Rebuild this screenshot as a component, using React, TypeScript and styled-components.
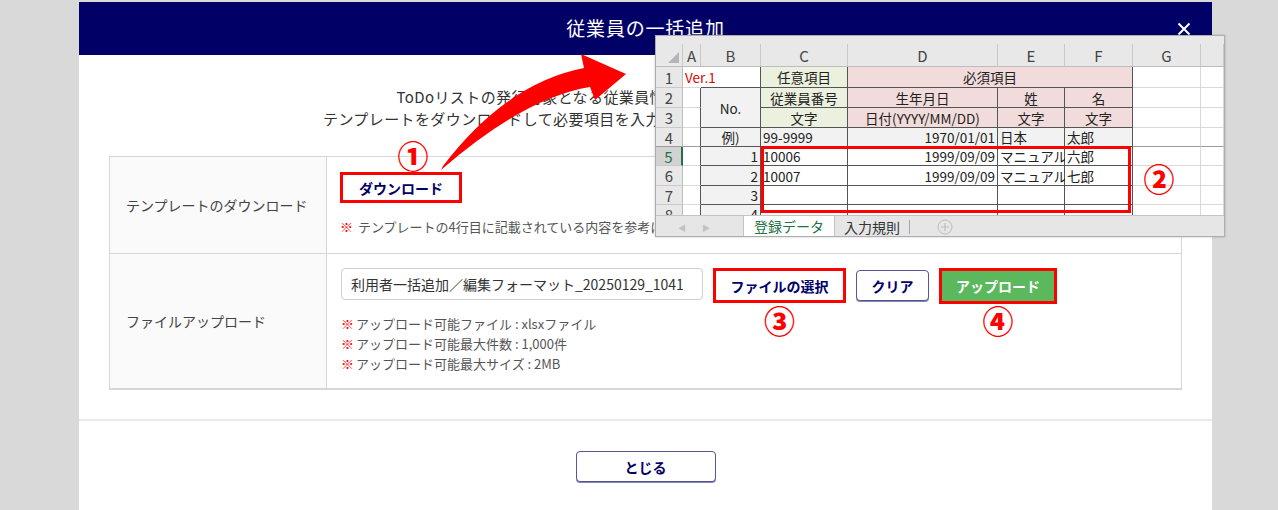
import React from 'react';
import styled, { createGlobalStyle } from 'styled-components';

const GlobalStyle = createGlobalStyle`
  html, body {
    margin: 0;
    padding: 0;
  }
  body {
    background: #d9d9d9;
    font-family: "Noto Sans CJK JP", "Noto Sans", sans-serif;
    color: #333;
  }
`;

const NAVY = '#000066';
const RED = '#ff0000';

const Stage = styled.div`
  position: relative;
  width: 1278px;
  height: 510px;
  overflow: hidden;
`;

const Modal = styled.div`
  margin: 2px 0 0 79px;
  width: 1133px;
  min-height: 600px;
  background: #fff;
`;

const Header = styled.header`
  height: 53px;
  background: ${NAVY};
  display: grid;
  grid-template-columns: 1fr auto 1fr;
  align-items: center;
  color: #fff;
`;

const Title = styled.h1`
  grid-column: 2;
  margin: 0 0 2px;
  font-size: 19px;
  font-weight: 400;
  letter-spacing: 0.8px;
`;

const CloseButton = styled.button`
  justify-self: end;
  margin-right: 18px;
  width: 20px;
  height: 20px;
  padding: 0;
  border: 0;
  background: none;
  display: flex;
  align-items: center;
  justify-content: center;
`;

const Body = styled.div`
  padding: 31px 30px 29px;
`;

const Intro = styled.p`
  margin: 0 0 26px;
  text-align: center;
  font-size: 15px;
  line-height: 22px;
  letter-spacing: 0.4px;
  color: #333;
`;

const FormTable = styled.div`
  display: grid;
  grid-template-columns: 217px 1fr;
  border: 1px solid #d6d6d6;
  border-bottom-width: 2px;
`;

const LabelCell = styled.div<{ $last?: boolean }>`
  display: flex;
  align-items: center;
  padding: 0 16px;
  background: #fafafa;
  border-right: 1px solid #d6d6d6;
  border-bottom: ${p => (p.$last ? 'none' : '1px solid #d6d6d6')};
  font-size: 14px;
  color: #444;
`;

const ValueCell = styled.div<{ $last?: boolean; $pad: string }>`
  padding: ${p => p.$pad};
  border-bottom: ${p => (p.$last ? 'none' : '1px solid #d6d6d6')};
`;

const Controls = styled.div`
  display: flex;
  align-items: flex-start;
  gap: 10px;
  height: 36px;
`;

const RedFrame = styled.div<{ $inline?: boolean }>`
  position: relative;
  display: ${p => (p.$inline ? 'inline-flex' : 'flex')};
  border: 3px solid ${RED};
`;

const FrameButton = styled.button<{ $w: number; $h: number; $green?: boolean }>`
  display: block;
  width: ${p => p.$w}px;
  height: ${p => p.$h}px;
  padding: 0;
  border: 0;
  background: ${p => (p.$green ? '#5cb85c' : '#fff')};
  color: ${p => (p.$green ? '#fff' : NAVY)};
  font-family: inherit;
  font-size: 14px;
  font-weight: 700;
`;

const OutlineButton = styled.button<{ $w: number; $h: number; $offset?: number }>`
  width: ${p => p.$w}px;
  height: ${p => p.$h}px;
  margin-top: ${p => p.$offset ?? 0}px;
  padding: 0;
  background: #fff;
  border: 1px solid #55559a;
  border-radius: 4px;
  box-shadow: 0 1px 0 #8585b5;
  color: ${NAVY};
  font-family: inherit;
  font-size: 14px;
  font-weight: 700;
`;

const FileInput = styled.div`
  box-sizing: border-box;
  width: 362px;
  height: 32px;
  display: flex;
  align-items: center;
  padding: 0 9px;
  border: 1px solid #cfcfcf;
  border-radius: 4px;
  font-size: 14px;
  color: #333;
  white-space: nowrap;
  overflow: hidden;
`;

const Notes = styled.ul<{ $gap: number }>`
  list-style: none;
  margin: ${p => p.$gap}px 0 0;
  padding: 0;
  font-size: 13px;
  line-height: 20px;
  color: #555;
`;

const Asterisk = styled.span`
  color: ${RED};
  margin-right: 2px;
`;

const Mark = styled.span<{ $top: string; $shift?: number }>`
  position: absolute;
  left: calc(50% + ${p => p.$shift ?? 0}px);
  top: ${p => p.$top};
  transform: translate(-50%, -50%);
  font-size: 31px;
  font-weight: 900;
  line-height: 1;
  color: ${RED};
  white-space: nowrap;
  pointer-events: none;
`;

const Footer = styled.div`
  border-top: 2px solid #e9e9e9;
  padding-top: 30px;
  display: flex;
  justify-content: center;
`;

/* ---- spreadsheet screenshot overlay ---- */

const COLUMNS = '27px 18px 60px 87px 150px 67px 68px 68px 1fr';

const Sheet = styled.div`
  position: absolute;
  left: 655px;
  top: 35px;
  width: 570px;
  height: 202px;
  box-sizing: border-box;
  border: 1px solid #aeaeae;
  box-shadow: 0 0 2px rgba(0, 0, 0, 0.25);
  background: #fff;
  display: flex;
  flex-direction: column;
  overflow: hidden;
  font-family: "Noto Sans CJK JP", sans-serif;
`;

const ColumnBand = styled.div`
  height: 31px;
  flex-shrink: 0;
  display: grid;
  grid-template-columns: ${COLUMNS};
  align-items: end;
  background: #e8e8e8;
  border-bottom: 1px solid #bdbdbd;
  box-sizing: border-box;
`;

const ColumnHead = styled.div`
  height: 22px;
  display: flex;
  align-items: center;
  justify-content: center;
  border-right: 1px solid #c9c9c9;
  font-size: 15px;
  color: #444;
`;

const Corner = styled.div`
  height: 22px;
  position: relative;
  border-right: 1px solid #c9c9c9;
  &::after {
    content: '';
    position: absolute;
    right: 3px;
    bottom: 3px;
    border-style: solid;
    border-width: 0 0 11px 11px;
    border-color: transparent transparent #b5b5b5 transparent;
  }
`;

const Grid = styled.div`
  height: 148px;
  flex-shrink: 0;
  display: grid;
  grid-template-columns: ${COLUMNS};
  grid-template-rows: 21px 20px 20px 19px 19px 20px 19px 19px;
  overflow: hidden;
`;

const RowHead = styled.div<{ $row: number; $active?: boolean; $bb: string }>`
  grid-column: 1;
  grid-row: ${p => p.$row};
  box-sizing: border-box;
  display: flex;
  align-items: center;
  justify-content: center;
  background: ${p => (p.$active ? '#d2d2d2' : '#e8e8e8')};
  border-right: ${p => (p.$active ? '2px solid #217346' : '1px solid #bdbdbd')};
  border-bottom: 1px solid ${p => p.$bb};
  font-size: 15px;
  color: ${p => (p.$active ? '#217346' : '#444')};
`;

type Align = 'left' | 'center' | 'right';

const Cell = styled.div<{
  $col: number;
  $row: number;
  $colSpan: number;
  $rowSpan: number;
  $bg: string;
  $align: Align;
  $color: string;
  $rb: string;
  $bb: string;
  $z: number;
}>`
  grid-column: ${p => p.$col} / span ${p => p.$colSpan};
  grid-row: ${p => p.$row} / span ${p => p.$rowSpan};
  position: relative;
  z-index: ${p => p.$z};
  box-sizing: border-box;
  display: flex;
  align-items: center;
  justify-content: ${p => (p.$align === 'left' ? 'flex-start' : p.$align === 'right' ? 'flex-end' : 'center')};
  padding: 0 2px;
  background: ${p => p.$bg};
  border-right: 1px solid ${p => p.$rb};
  border-bottom: 1px solid ${p => p.$bb};
  font-size: 13.5px;
  color: ${p => p.$color};
  white-space: nowrap;
`;

const AnnotBox = styled.div`
  position: absolute;
  z-index: 5;
  left: 105px;
  top: 110px;
  width: 370px;
  height: 67px;
  box-sizing: border-box;
  border: 3px solid ${RED};
  pointer-events: none;
`;

const SheetMark = styled.span`
  position: absolute;
  z-index: 5;
  left: 503px;
  top: 141px;
  transform: translate(-50%, -50%);
  font-size: 31px;
  font-weight: 900;
  line-height: 1;
  color: ${RED};
`;

const TabBar = styled.div`
  flex: 1;
  display: flex;
  align-items: stretch;
  background: #e6e6e6;
  border-top: 1px solid #c4c4c4;
  font-size: 14px;
`;

const TabNav = styled.div`
  width: 87px;
  display: flex;
  align-items: center;
  gap: 16px;
  padding-left: 22px;
  box-sizing: border-box;
  font-size: 8px;
  color: #c2c2c2;
`;

const SheetTab = styled.div<{ $active?: boolean }>`
  display: flex;
  align-items: center;
  padding: ${p => (p.$active ? '0 10px' : '0 9px')};
  background: ${p => (p.$active ? '#fff' : 'transparent')};
  color: ${p => (p.$active ? '#217346' : '#333')};
  border-bottom: ${p => (p.$active ? '2px solid #217346' : '0')};
  border-left: ${p => (p.$active ? '1px solid #c4c4c4' : '0')};
  border-right: ${p => (p.$active ? '1px solid #c4c4c4' : '0')};
`;

const TabSeparator = styled.div`
  width: 1px;
  margin: 4px 0;
  background: #a8a8a8;
`;

const AddSheet = styled.div`
  display: flex;
  align-items: center;
  margin-left: 27px;
`;

const Overlay = styled.svg`
  position: absolute;
  left: 0;
  top: 0;
  pointer-events: none;
`;

type CellSpec = {
  col: number;
  row: number;
  text?: string;
  colSpan?: number;
  rowSpan?: number;
  bg?: string;
  align?: Align;
  color?: string;
};

const GREEN_BG = '#ebf1de';
const PINK_BG = '#f2dcdb';
const GRAY_BG = '#f2f2f2';

const specs: CellSpec[] = [
  { col: 2, row: 1, text: 'Ver.1', align: 'left', color: '#e00000' },
  { col: 4, row: 1, text: '任意項目', bg: GREEN_BG },
  { col: 5, row: 1, colSpan: 3, text: '必須項目', bg: PINK_BG },
  { col: 3, row: 2, rowSpan: 2, text: 'No.', bg: GRAY_BG },
  { col: 4, row: 2, text: '従業員番号', bg: GREEN_BG },
  { col: 5, row: 2, text: '生年月日', bg: PINK_BG },
  { col: 6, row: 2, text: '姓', bg: PINK_BG },
  { col: 7, row: 2, text: '名', bg: PINK_BG },
  { col: 4, row: 3, text: '文字', bg: GREEN_BG },
  { col: 5, row: 3, text: '日付(YYYY/MM/DD)', bg: PINK_BG },
  { col: 6, row: 3, text: '文字', bg: PINK_BG },
  { col: 7, row: 3, text: '文字', bg: PINK_BG },
  { col: 3, row: 4, text: '例)', bg: GRAY_BG },
  { col: 4, row: 4, text: '99-9999', bg: GRAY_BG, align: 'left' },
  { col: 5, row: 4, text: '1970/01/01', bg: GRAY_BG, align: 'right' },
  { col: 6, row: 4, text: '日本', bg: GRAY_BG, align: 'left' },
  { col: 7, row: 4, text: '太郎', bg: GRAY_BG, align: 'left' },
  { col: 3, row: 5, text: '1', bg: GRAY_BG, align: 'right' },
  { col: 4, row: 5, text: '10006', align: 'left' },
  { col: 5, row: 5, text: '1999/09/09', align: 'right' },
  { col: 6, row: 5, text: 'マニュアル', align: 'left' },
  { col: 7, row: 5, text: '六郎', align: 'left' },
  { col: 3, row: 6, text: '2', bg: GRAY_BG, align: 'right' },
  { col: 4, row: 6, text: '10007', align: 'left' },
  { col: 5, row: 6, text: '1999/09/09', align: 'right' },
  { col: 6, row: 6, text: 'マニュアル', align: 'left' },
  { col: 7, row: 6, text: '七郎', align: 'left' },
  { col: 3, row: 7, text: '3', bg: GRAY_BG, align: 'right' },
  { col: 3, row: 8, text: '4', bg: GRAY_BG, align: 'right' },
];

const DARK = '#555';
const LIGHT = '#d9d9d9';
const FREEZE = '#9c9c9c';

const inTable = (col: number, row: number) =>
  (col >= 3 && col <= 7 && row >= 2) || (col >= 4 && col <= 7 && row === 1);

function buildCells(): CellSpec[] {
  const covered = new Set<string>();
  specs.forEach(s => {
    for (let c = s.col; c < s.col + (s.colSpan ?? 1); c++)
      for (let r = s.row; r < s.row + (s.rowSpan ?? 1); r++) covered.add(`${c}-${r}`);
  });
  const all = [...specs];
  for (let r = 1; r <= 8; r++)
    for (let c = 2; c <= 9; c++) if (!covered.has(`${c}-${r}`)) all.push({ col: c, row: r });
  return all;
}

function borders(s: CellSpec) {
  const lastCol = s.col + (s.colSpan ?? 1) - 1;
  const lastRow = s.row + (s.rowSpan ?? 1) - 1;
  let rb = LIGHT;
  let bb = LIGHT;
  if (inTable(s.col, s.row) || inTable(lastCol + 1, s.row)) rb = DARK;
  if (inTable(s.col, s.row) || inTable(s.col, lastRow + 1)) bb = DARK;
  if (bb !== DARK && lastRow === 4) bb = FREEZE;
  if (s.col === 2 && s.row === 1) rb = '#fff';
  return { rb, bb };
}

const sheetCells = buildCells();

const SpreadsheetShot: React.FC = () => (
  <Sheet>
    <ColumnBand>
      <Corner />
      {['A', 'B', 'C', 'D', 'E', 'F', 'G', ''].map((l, i) => (
        <ColumnHead key={i}>{l}</ColumnHead>
      ))}
    </ColumnBand>
    <Grid>
      {[1, 2, 3, 4, 5, 6, 7, 8].map(r => (
        <RowHead key={r} $row={r} $active={r === 5} $bb={r === 4 ? FREEZE : '#c9c9c9'}>
          {r}
        </RowHead>
      ))}
      {sheetCells.map(s => {
        const { rb, bb } = borders(s);
        return (
          <Cell
            key={`${s.col}-${s.row}`}
            $col={s.col}
            $row={s.row}
            $colSpan={s.colSpan ?? 1}
            $rowSpan={s.rowSpan ?? 1}
            $bg={s.bg ?? (s.col === 3 && s.row === 1 ? 'transparent' : '#fff')}
            $align={s.align ?? 'center'}
            $color={s.color ?? '#222'}
            $rb={rb}
            $bb={bb}
            $z={s.col === 2 && s.row === 1 ? 2 : 1}
          >
            {s.text}
          </Cell>
        );
      })}
    </Grid>
    <TabBar>
      <TabNav>
        <span>◀</span>
        <span>▶</span>
      </TabNav>
      <SheetTab $active>登録データ</SheetTab>
      <SheetTab>入力規則</SheetTab>
      <TabSeparator />
      <AddSheet>
        <svg width="16" height="16" viewBox="0 0 16 16">
          <circle cx="8" cy="8" r="7" fill="none" stroke="#bdbdbd" strokeWidth="1" />
          <path d="M8 4v8M4 8h8" stroke="#bdbdbd" strokeWidth="1.2" />
        </svg>
      </AddSheet>
    </TabBar>
    <AnnotBox />
    <SheetMark>②</SheetMark>
  </Sheet>
);

const App: React.FC = () => {
  return (
    <>
      <GlobalStyle />
      <Stage>
        <Modal>
          <Header>
            <Title>従業員の一括追加</Title>
            <CloseButton aria-label="閉じる">
              <svg width="14" height="14" viewBox="0 0 14 14">
                <path d="M1.5 1.5l11 11M12.5 1.5l-11 11" stroke="#fff" strokeWidth="2" />
              </svg>
            </CloseButton>
          </Header>
          <Body>
            <Intro>
              ToDoリストの発行対象となる従業員情報を一括で追加・編集できます。
              <br />
              テンプレートをダウンロードして必要項目を入力し、ファイルをアップロードしてください。
            </Intro>
            <FormTable>
              <LabelCell>テンプレートのダウンロード</LabelCell>
              <ValueCell $pad="15px 14px 16px 13px">
                <RedFrame $inline>
                  <FrameButton $w={116} $h={25}>ダウンロード</FrameButton>
                  <Mark $top="-21px" $shift={12}>①</Mark>
                </RedFrame>
                <Notes $gap={14}>
                  <li>
                    <Asterisk>※</Asterisk> テンプレートの4行目に記載されている内容を参考に、必要項目を入力してください。
                  </li>
                </Notes>
              </ValueCell>
              <LabelCell $last>ファイルアップロード</LabelCell>
              <ValueCell $last $pad="14px 14px 14px 14px">
                <Controls>
                  <FileInput>利用者一括追加／編集フォーマット_20250129_1041</FileInput>
                  <RedFrame>
                    <FrameButton $w={127} $h={29}>ファイルの選択</FrameButton>
                    <Mark $top="calc(100% + 19px)">③</Mark>
                  </RedFrame>
                  <OutlineButton $w={73} $h={31} $offset={2}>クリア</OutlineButton>
                  <RedFrame>
                    <FrameButton $w={112} $h={30} $green>アップロード</FrameButton>
                    <Mark $top="calc(100% + 18px)">④</Mark>
                  </RedFrame>
                </Controls>
                <Notes $gap={10}>
                  <li><Asterisk>※</Asterisk>アップロード可能ファイル : xlsxファイル</li>
                  <li><Asterisk>※</Asterisk>アップロード可能最大件数 : 1,000件</li>
                  <li><Asterisk>※</Asterisk>アップロード可能最大サイズ : 2MB</li>
                </Notes>
              </ValueCell>
            </FormTable>
          </Body>
          <Footer>
            <OutlineButton $w={140} $h={31}>とじる</OutlineButton>
          </Footer>
        </Modal>
        <SpreadsheetShot />
        <Overlay width="1278" height="510" viewBox="0 0 1278 510">
          <path
            d="M443 166 Q506.5 83 584 68 L581 54 L626 74 L595 100 L590 87 Q524.5 97.5 441 170 Z"
            fill={RED}
          />
        </Overlay>
      </Stage>
    </>
  );
};

export default App;
